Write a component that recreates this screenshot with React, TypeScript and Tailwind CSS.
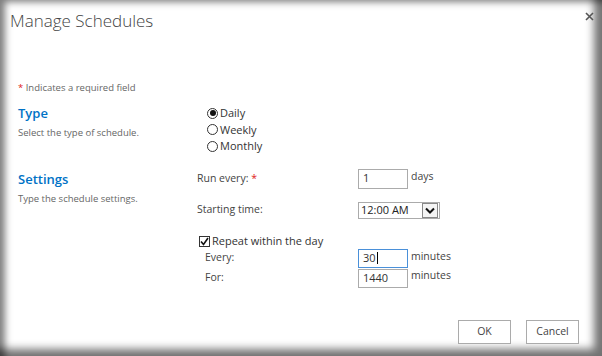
import React from "react";

function Radio({ checked, label }: { checked?: boolean; label: string }) {
  return (
    <div className="flex items-center h-[16.5px]">
      <div className="w-[11px] h-[11px] rounded-full border border-[#333] bg-white flex items-center justify-center">
        {checked && <div className="w-[6px] h-[6px] rounded-full bg-[#111]" />}
      </div>
      <span className="ml-[2px] text-[11px] leading-[14px] text-[#333]">{label}</span>
    </div>
  );
}

function TextBox({ value, focused, caret }: { value: string; focused?: boolean; caret?: boolean }) {
  return (
    <div
      className={`w-[50px] h-full bg-white border flex items-center pl-[4px] text-[11px] text-[#333] ${
        focused ? "border-[#4a90d9]" : "border-[#ababab]"
      }`}
    >
      <span>{value}</span>
      {caret && <span className="w-px h-[12px] bg-black ml-px" />}
    </div>
  );
}

export default function App() {
  return (
    <div className="relative w-[602px] h-[356px] bg-white overflow-hidden font-['Open_Sans',sans-serif] shadow-[inset_7px_4px_7px_-2px_rgba(0,0,0,0.5),inset_-11px_-10px_9px_-3px_rgba(0,0,0,0.55)]">
      {/* Header */}
      <div className="pt-[9px] pl-[10px] h-[33px] text-[17px] font-light leading-[24px] text-[#444]">
        Manage Schedules
      </div>
      <button className="absolute top-[11px] right-[8px] w-[10px] h-[10px] flex items-center justify-center">
        <svg width="9" height="9" viewBox="0 0 9 9">
          <path d="M1 1 L8 8 M8 1 L1 8" stroke="#555" strokeWidth="1.6" />
        </svg>
      </button>

      <div className="pl-[18px]">
        {/* required note */}
        <div className="mt-[48px] h-[14px] text-[9.5px] leading-[14px] text-[#666]">
          <span className="text-[#e02020]">*</span> Indicates a required field
        </div>

        {/* Type section */}
        <div className="mt-[10px] flex">
          <div className="w-[179px]">
            <div className="text-[13px] font-semibold leading-[16px] text-[#0072c6]">Type</div>
            <div className="mt-[5px] text-[9.5px] leading-[14px] text-[#666]">
              Select the type of schedule.
            </div>
          </div>
          <div className="pl-[10px] pt-[0px]">
            <Radio checked label="Daily" />
            <Radio label="Weekly" />
            <Radio label="Monthly" />
          </div>
        </div>

        {/* Settings section */}
        <div className="mt-[14px] flex">
          <div className="w-[179px] pt-[2px]">
            <div className="text-[13px] font-semibold leading-[16px] text-[#0072c6]">Settings</div>
            <div className="mt-[5px] text-[9.5px] leading-[14px] text-[#666]">
              Type the schedule settings.
            </div>
          </div>
          <div className="flex flex-col">
            <div className="flex h-[20px] items-center">
              <div className="w-[161px] text-[10.5px] text-[#444]">
                Run every: <span className="text-[#e02020]">*</span>
              </div>
              <TextBox value="1" />
              <span className="ml-[3px] -mt-[4px] text-[10.5px] text-[#444]">days</span>
            </div>
            <div className="mt-[13px] flex h-[17px] items-center">
              <div className="w-[161px] text-[10.5px] text-[#444]">Starting time:</div>
              <div className="w-[82px] h-full border border-[#ababab] bg-white flex items-center">
                <span className="pl-[2px] text-[11px] text-[#222] flex-1">12:00 AM</span>
                <div className="w-[16px] h-[15px] border border-[#888] bg-[#f4f4f4] flex items-center justify-center mr-px">
                  <svg width="10" height="7" viewBox="0 0 10 7">
                    <path d="M1 1.5 L5 5.5 L9 1.5" stroke="#111" strokeWidth="2" fill="none" />
                  </svg>
                </div>
              </div>
            </div>
            <div className="mt-[16px] flex h-[14px] items-center pl-[2px]">
              <div className="w-[11px] h-[11px] border border-[#333] bg-white flex items-center justify-center">
                <svg width="9" height="9" viewBox="0 0 9 9">
                  <path d="M1 4.5 L3.5 7.5 L8 1" stroke="#111" strokeWidth="1.6" fill="none" />
                </svg>
              </div>
              <span className="ml-[2px] text-[11px] text-[#333]">Repeat within the day</span>
            </div>
            <div className="flex h-[19px] items-center">
              <div className="w-[161px] pl-[8px] text-[10.5px] text-[#444]">Every:</div>
              <TextBox value="30" focused caret />
              <span className="ml-[3px] -mt-[2px] text-[10.5px] text-[#444]">minutes</span>
            </div>
            <div className="mt-px flex h-[19px] items-center">
              <div className="w-[161px] pl-[8px] text-[10.5px] text-[#444]">For:</div>
              <TextBox value="1440" />
              <span className="ml-[3px] -mt-[4px] text-[10.5px] text-[#444]">minutes</span>
            </div>
          </div>
        </div>
      </div>

      {/* Footer buttons */}
      <div className="mt-[32px] flex justify-end pr-[23px] gap-[15px]">
        <button className="w-[53px] h-[24px] border border-[#ababab] bg-white text-[10.5px] text-[#444]">
          OK
        </button>
        <button className="w-[53px] h-[24px] border border-[#ababab] bg-white text-[10.5px] text-[#444]">
          Cancel
        </button>
      </div>
    </div>
  );
}
